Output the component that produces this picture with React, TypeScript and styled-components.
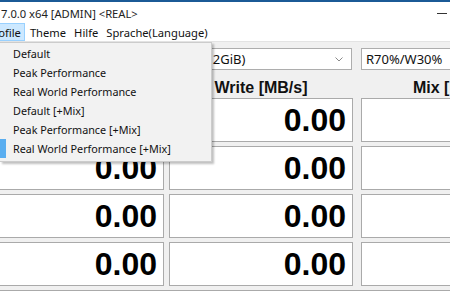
import React from 'react';
import styled, { createGlobalStyle } from 'styled-components';

// CrystalDiskMark 창 + 열린 Profile 메뉴

const GlobalStyle = createGlobalStyle`
	html, body {
		margin: 0;
		padding: 0;
		width: 450px;
		height: 300px;
		overflow: hidden;
		background: #f0f0f0;
	}
	#root {
		width: 450px;
		height: 300px;
	}
`;

const profiles = [
	'Default',
	'Peak Performance',
	'Real World Performance',
	'Default [+Mix]',
	'Peak Performance [+Mix]',
	'Real World Performance [+Mix]',
];

const menuItems = ['Profile', 'Theme', 'Hilfe', 'Sprache(Language)'];

const App = () => {
	const rows = [0, 1, 2, 3];

	return (
		<React.Fragment>
			<GlobalStyle />
			<Window>
				<TopLine />
				<TitleBar>
					<Title>7.0.0 x64 [ADMIN] &lt;REAL&gt;</Title>
					<Minimize />
				</TitleBar>
				<MenuBar>
					{menuItems.map((m, i) => (
						<MenuItem key={m} $active={i === 0}>
							{m}
						</MenuItem>
					))}
				</MenuBar>
				<Body>
					<Grid>
						<Select $span>
							<span>C: 0% (0/512GiB)</span>
							<Chevron />
						</Select>
						<Select $col={3}>
							<span>R70%/W30%</span>
							<Chevron />
						</Select>

						<Header $col={1}>Read [MB/s]</Header>
						<Header $col={2}>Write [MB/s]</Header>
						<Header $col={3}>Mix [MB/s]</Header>

						{rows.map((r) => (
							<React.Fragment key={r}>
								<Cell $col={1}>0.00</Cell>
								<Cell $col={2}>0.00</Cell>
								<Cell $col={3} />
							</React.Fragment>
						))}

						<Comment />
					</Grid>
				</Body>

				<Dropdown>
					{profiles.map((p, i) => (
						<DropItem key={p} $checked={i === profiles.length - 1}>
							{p}
						</DropItem>
					))}
				</Dropdown>
			</Window>
		</React.Fragment>
	);
};

const Chevron = () => (
	<ChevronSvg width="8" height="5" viewBox="0 0 8 5">
		<path d="M0.5 0.5 L4 4 L7.5 0.5" fill="none" stroke="#8a8a8a" strokeWidth="1" />
	</ChevronSvg>
);

export default App;

const uiFont = `"Noto Sans", "Open Sans", sans-serif`;

const Window = styled.div`
	position: relative;
	width: 450px;
	height: 300px;
	display: flex;
	flex-direction: column;
	overflow: hidden;
	font-family: ${uiFont};
`;

const TopLine = styled.div`
	height: 2px;
	background: #1b5a96;
	flex-shrink: 0;
`;

const TitleBar = styled.div`
	height: 21px;
	background: #ffffff;
	display: flex;
	align-items: center;
	justify-content: space-between;
	flex-shrink: 0;
`;

const Title = styled.div`
	font-size: 11.2px;
	color: #222;
	padding-left: 1px;
	margin-top: 1px;
`;

const Minimize = styled.div`
	width: 10px;
	height: 1px;
	background: #333;
	margin-right: 3px;
	margin-top: 1px;
`;

const MenuBar = styled.div`
	height: 18px;
	background: #ffffff;
	display: flex;
	align-items: stretch;
	flex-shrink: 0;
	border-bottom: 1px solid #e3e3e3;
`;

const MenuItem = styled.div<{ $active?: boolean }>`
	font-size: 11.2px;
	color: #111;
	padding: 1px 3px 0;
	display: flex;
	align-items: center;
	background: ${(p) => (p.$active ? '#cce8ff' : 'transparent')};
	border: 1px solid ${(p) => (p.$active ? '#99d1ff' : 'transparent')};
	&:first-child {
		margin-left: -17px;
		margin-right: 1px;
	}
`;

const Body = styled.div`
	flex: 1;
	background: #f0f0f0;
	padding-top: 6px;
	margin-left: -20px;
`;

const Grid = styled.div`
	width: 565px;
	display: grid;
	grid-template-columns: 184px 189px 192px;
	grid-template-rows: 22px 20px repeat(4, 44px) 40px;
	row-gap: 4px;
`;

const colMargin = (col?: number) => (col === 2 ? '5px' : col === 3 ? '8px' : '0');

const Select = styled.div<{ $col?: number; $span?: boolean }>`
	grid-column: ${(p) => (p.$span ? '1 / 3' : p.$col)};
	grid-row: 1;
	margin-left: ${(p) => (p.$span ? '160px' : colMargin(p.$col))};
	margin-right: ${(p) => (p.$span ? '1px' : '0')};
	background: #ffffff;
	border: 1px solid #adadad;
	box-sizing: border-box;
	display: flex;
	align-items: center;
	justify-content: space-between;
	padding: 0 8px 0 4px;
	font-size: 13px;
	color: #111;
	span {
		white-space: nowrap;
	}
`;

const ChevronSvg = styled.svg`
	flex-shrink: 0;
`;

const Header = styled.div<{ $col: number }>`
	grid-column: ${(p) => p.$col};
	grid-row: 2;
	margin-left: ${(p) => colMargin(p.$col)};
	font-family: 'Liberation Sans', Arial, sans-serif;
	font-weight: bold;
	font-size: 16px;
	line-height: 16px;
	padding-top: 6px;
	text-align: center;
	color: #111;
	white-space: nowrap;
`;

const Cell = styled.div<{ $col: number }>`
	grid-column: ${(p) => p.$col};
	margin-left: ${(p) => colMargin(p.$col)};
	background: #ffffff;
	border: 1px solid #aaaaaa;
	box-sizing: border-box;
	display: flex;
	align-items: center;
	justify-content: flex-end;
	padding-right: 6px;
	font-family: 'Liberation Sans', Arial, sans-serif;
	font-weight: bold;
	font-size: 32px;
	color: #000;
`;

const Comment = styled.div`
	grid-column: 1 / 4;
	background: #ffffff;
	border: 1px solid #aaaaaa;
	border-bottom: none;
`;

const Dropdown = styled.div`
	position: absolute;
	left: 0;
	top: 42px;
	width: 212px;
	box-sizing: border-box;
	padding: 1px 0 3px;
	background: #f2f2f2;
	border: 1px solid #cccccc;
	border-left: none;
	box-shadow: 2px 2px 2px rgba(0, 0, 0, 0.25);
`;

const DropItem = styled.div<{ $checked?: boolean }>`
	position: relative;
	height: 19px;
	line-height: 19px;
	padding-left: 13px;
	font-size: 10.8px;
	color: #111;
	white-space: nowrap;
	&::before {
		content: '';
		display: ${(p) => (p.$checked ? 'block' : 'none')};
		position: absolute;
		left: 0;
		top: 0;
		width: 6px;
		height: 19px;
		background: #5aaef0;
	}
`;
